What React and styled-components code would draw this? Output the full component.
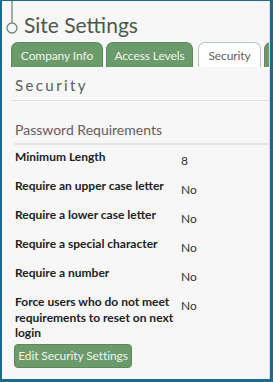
import React from 'react'
import styled, { createGlobalStyle } from 'styled-components'

const GlobalStyle = createGlobalStyle`
  html, body {
    margin: 0;
    padding: 0;
    background: #ffffff;
  }
  body {
    font-family: 'Lato', 'Open Sans', sans-serif;
  }
`

const rows = [
  { label: 'Minimum Length', value: '8' },
  { label: 'Require an upper case letter', value: 'No' },
  { label: 'Require a lower case letter', value: 'No' },
  { label: 'Require a special character', value: 'No' },
  { label: 'Require a number', value: 'No' },
  { label: 'Force users who do not meet requirements to reset on next login', value: 'No' },
]

const tabs = [
  { name: 'Company Info', width: 92 },
  { name: 'Access Levels', width: 87 },
  { name: 'Security', width: 63, active: true },
  { name: '', width: 40 },
]

const TitleMark = () => (
  <MarkSvg width="18" height="34" viewBox="0 0 18 34">
    <line x1="10" y1="0" x2="10" y2="21.5" stroke="#6b8a78" strokeWidth="1.3" />
    <circle cx="10" cy="27" r="5" fill="none" stroke="#6b8a78" strokeWidth="1.3" />
  </MarkSvg>
)

export default function App() {
  return (
    <>
      <GlobalStyle />
      <Frame>
        <Inner>
          <Header>
            <TitleMark />
            <Title>Site Settings</Title>
          </Header>
          <TabBar>
            {tabs.map((tab, i) => (
              <Tab key={i} $active={tab.active} $width={tab.width}>
                {tab.name}
              </Tab>
            ))}
          </TabBar>
          <Content>
            <SectionTitle>Security</SectionTitle>
            <GroupTitle>Password Requirements</GroupTitle>
            <Rows>
              {rows.map(row => (
                <Row key={row.label}>
                  <Label>{row.label}</Label>
                  <Value>{row.value}</Value>
                </Row>
              ))}
            </Rows>
            <EditButton>Edit Security Settings</EditButton>
          </Content>
        </Inner>
      </Frame>
    </>
  )
}

const Frame = styled.div`
  width: 273px;
  height: 382px;
  box-sizing: border-box;
  border-style: solid;
  border-color: #1e6a8c;
  border-width: 1px 3px 3px 2px;
  overflow: hidden;
  background: #f7f7f7;
`

const Inner = styled.div`
  height: 100%;
  box-sizing: border-box;
  border-right: 1px solid #dcdcdc;
  overflow: hidden;
`

const Header = styled.div`
  display: flex;
  align-items: flex-end;
  height: 41px;
`

const MarkSvg = styled.svg`
  display: block;
  flex: none;
  margin-bottom: 7px;
`

const Title = styled.h1`
  margin: 0 0 4px 4px;
  font-family: 'Lato', 'Open Sans', sans-serif;
  font-weight: 400;
  font-size: 21px;
  line-height: 26px;
  color: #4c584c;
  white-space: nowrap;
`

const TabBar = styled.div`
  display: flex;
  gap: 3px;
  padding-left: 9px;
  height: 25px;
  overflow: hidden;
`

const Tab = styled.div`
  flex: none;
  width: ${p => p.$width}px;
  box-sizing: border-box;
  height: 26px;
  display: flex;
  align-items: center;
  justify-content: center;
  border-radius: 7px 7px 0 0;
  font-size: 12px;
  font-weight: 400;
  letter-spacing: -0.1px;
  white-space: nowrap;
  border: 1px solid ${p => (p.$active ? '#b9c9b9' : '#5c8a5c')};
  border-bottom: none;
  background: ${p => (p.$active ? '#ffffff' : '#6b9a6b')};
  color: ${p => (p.$active ? '#5a625a' : '#eef6ea')};
  margin-left: ${p => (p.$active ? '2px' : '0')};
`

const Content = styled.div`
  padding: 0 0 0 10px;
`

const SectionTitle = styled.h2`
  margin: 0;
  padding: 9px 0 6px 3px;
  font-weight: 400;
  font-size: 15px;
  line-height: 18px;
  letter-spacing: 2.4px;
  color: #56625a;
  border-bottom: 1px solid #e2e2e2;
`

const GroupTitle = styled.h3`
  margin: 0 0 0 2px;
  padding: 20px 0 4px 1px;
  font-weight: 400;
  font-size: 14px;
  line-height: 18px;
  color: #6a5a5a;
  border-bottom: 2px solid #e6e6e6;
`

const Rows = styled.div`
  display: flex;
  flex-direction: column;
  padding: 4px 0 0 3px;
`

const Row = styled.div`
  display: grid;
  grid-template-columns: 166px 1fr;
  min-height: 29px;
`

const Label = styled.div`
  font-size: 12px;
  font-weight: 700;
  line-height: 15.5px;
  color: #222222;
`

const Value = styled.div`
  font-size: 12px;
  line-height: 15.5px;
  padding-top: 4px;
  color: #333333;
`

const EditButton = styled.button`
  display: block;
  margin: 3px 0 0 2px;
  width: 118px;
  height: 24px;
  padding: 0;
  border: 1px solid #5a8a5a;
  border-radius: 4px;
  background: #6b9a6b;
  color: #eef6ea;
  font-family: 'Lato', 'Open Sans', sans-serif;
  font-size: 12px;
  font-weight: 400;
  letter-spacing: -0.1px;
  white-space: nowrap;
`
